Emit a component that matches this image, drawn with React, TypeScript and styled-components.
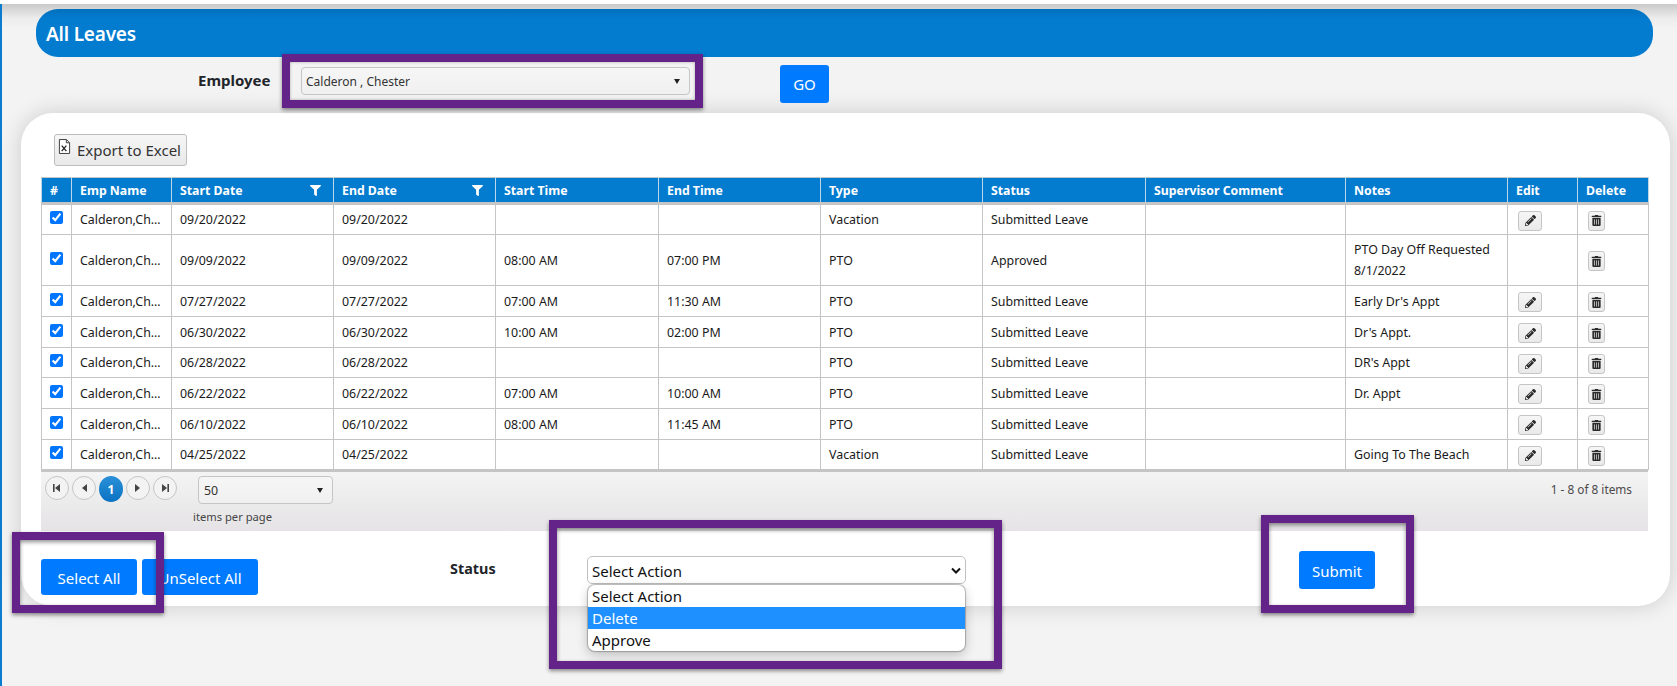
import React from "react";
import styled, { createGlobalStyle } from "styled-components";
import { FaPencilAlt, FaTrashAlt, FaFilter } from "react-icons/fa";

const Global = createGlobalStyle`
  html, body { margin: 0; padding: 0; background: #fff; }
  body { font-family: "Noto Sans", "Open Sans", Arial, sans-serif; overflow: hidden; color: #212529; }
`;

const Page = styled.div`
  position: relative;
  width: 1677px;
  height: 686px;
  overflow: hidden;
  background: #fff;
`;

const Shell = styled.div`
  height: 682px;
  margin-top: 4px;
  box-sizing: border-box;
  padding-top: 5px;
  border-left: 2px solid #0b7dd0;
  background: linear-gradient(#c9c9c9 0, #ececec 14px, #f3f3f3 24px);
`;

const TitleBar = styled.h1`
  margin: 0 24px 0 34px;
  height: 48px;
  box-sizing: border-box;
  padding-left: 10px;
  border-radius: 22px;
  background: linear-gradient(#0270bd 0, #037bcf 10px);
  color: #fff;
  font-size: 19px;
  font-weight: 600;
  line-height: 50px;
  letter-spacing: -0.2px;
`;

const Toolbar = styled.div`
  display: grid;
  grid-template-columns: 103px 389px 90px auto;
  justify-content: start;
  align-items: start;
  height: 56px;
  padding-left: 196px;
`;

const EmployeeLabel = styled.label`
  margin-top: 12px;
  font-size: 15px;
  line-height: 22px;
  font-weight: 700;
  color: #212529;
`;

const ComboBox = styled.div<{ $w?: number }>`
  display: flex;
  align-items: center;
  justify-content: space-between;
  box-sizing: border-box;
  width: ${(p) => p.$w ?? 388}px;
  height: 28px;
  padding: 0 9px 0 5px;
  border: 1px solid #c5c5c5;
  border-radius: 4px;
  background: linear-gradient(#f6f6f6, #f0f0f0);
  color: #333;
  font-size: 12.4px;
`;

const EmployeeCombo = styled(ComboBox)`
  margin-top: 10px;
  padding-left: 4px;
  font-size: 12px;
`;

const Caret = styled.i`
  display: block;
  width: 0;
  height: 0;
  border-left: 3.5px solid transparent;
  border-right: 3.5px solid transparent;
  border-top: 5px solid #222;
`;

const PrimaryButton = styled.button`
  box-sizing: border-box;
  padding: 0;
  border: 0;
  border-radius: 3px;
  background: #007bff;
  color: #fff;
  font-family: inherit;
  font-size: 15px;
`;

const GoButton = styled(PrimaryButton)`
  width: 49px;
  height: 38px;
  margin-top: 8px;
`;

const Card = styled.section`
  box-sizing: border-box;
  height: 493px;
  margin: 0 7px 0 19px;
  padding: 21px 20px 0;
  border-radius: 32px;
  background: #fff;
  box-shadow: 0 0 22px rgba(0, 0, 0, 0.16);
`;

const ExportButton = styled.button`
  display: flex;
  align-items: center;
  gap: 6px;
  box-sizing: border-box;
  width: 133px;
  height: 32px;
  margin: 0 0 11px 13px;
  padding: 0 0 0 3px;
  border: 1px solid #bdbdbd;
  border-radius: 3px;
  background: linear-gradient(#f6f6f6, #e9e9e9);
  color: #333;
  font-family: inherit;
  font-size: 15px;
`;

const ExportIconSlot = styled.span`
  display: block;
  height: 24px;
`;

const Grid = styled.table`
  width: 1607px;
  table-layout: fixed;
  border-collapse: collapse;
  font-size: 12.4px;
  color: #1a1a1a;
`;

const HeadCell = styled.th`
  height: 24px;
  padding: 0 0 0 8px;
  border: 1px solid #c5c5c5;
  border-left-color: #bcd6ea;
  border-right-color: #bcd6ea;
  border-bottom: 3px solid #c5c5c5;
  background: #037bcf;
  color: #fff;
  font-size: 12.3px;
  font-weight: 700;
  text-align: left;
  white-space: nowrap;
  overflow: hidden;
`;

const HeadInner = styled.span`
  display: flex;
  align-items: center;
  justify-content: space-between;
  padding-right: 12px;
`;

const BodyRow = styled.tr<{ $short?: boolean }>`
  & > td {
    height: ${(p) => (p.$short ? 21 : 22)}px;
  }
`;

const Cell = styled.td`
  padding: 4px 8px;
  border: 1px solid #c5c5c5;
  line-height: 21px;
  vertical-align: middle;
`;

const NameCell = styled(Cell)`
  max-width: 84px;
  white-space: nowrap;
  overflow: hidden;
  text-overflow: ellipsis;
`;

const CheckCell = styled(Cell)`
  padding: 0 0 4px 8px;
`;

const IconCell = styled(Cell)`
  padding: 3px 8px;
`;

const Check = styled.input`
  display: block;
  width: 13px;
  height: 13px;
  margin: 0;
`;

const IconButton = styled.button<{ $w: number }>`
  display: flex;
  align-items: center;
  justify-content: center;
  box-sizing: border-box;
  width: ${(p) => p.$w}px;
  height: 20px;
  margin: 2px 0 0 2px;
  padding: 0;
  border: 1px solid #c5c5c5;
  border-radius: 3px;
  background: linear-gradient(#f6f6f6, #e9e9e9);
  color: #2b2b2b;
`;

const GridFooter = styled.div`
  display: flex;
  justify-content: space-between;
  align-items: flex-start;
  box-sizing: border-box;
  width: 1607px;
  height: 61px;
  padding: 4px 16px 0 4px;
  border-top: 2px solid #c5c5c5;
  background: linear-gradient(#f4f4f4, #e5e3e5);
`;

const FooterLeft = styled.div`
  display: flex;
  align-items: flex-start;
  gap: 4px;
`;

const Pager = styled.div`
  display: flex;
  align-items: flex-start;
  gap: 3px;
  width: 144px;
`;

const PageButton = styled.span`
  display: flex;
  align-items: center;
  justify-content: center;
  box-sizing: border-box;
  width: 24px;
  height: 24px;
  border: 1px solid #c5c5c5;
  border-radius: 50%;
  background: #f3f3f3;
`;

const PageCurrent = styled.span`
  display: flex;
  align-items: center;
  justify-content: center;
  width: 24px;
  height: 26px;
  border-radius: 50%;
  background: linear-gradient(#2a90d8, #0a72c2);
  color: #fff;
  font-size: 12px;
  font-weight: 700;
`;

const SizeColumn = styled.div`
  display: flex;
  flex-direction: column;
  align-items: flex-start;
`;

const SizeCombo = styled(ComboBox)`
  margin-left: 5px;
  color: #333;
`;

const PerPage = styled.span`
  margin-top: 3px;
  font-size: 11.2px;
  line-height: 20px;
  color: #444;
`;

const ItemCount = styled.span`
  margin-top: 3px;
  font-size: 11.8px;
  line-height: 20px;
  color: #4a4a4a;
`;

const ActionRow = styled.div`
  display: grid;
  grid-template-columns: 409px 137px 379px 333px auto;
  align-items: start;
`;

const SelectionButtons = styled.div`
  display: flex;
  gap: 5px;
  margin-top: 28px;
`;

const SelectAllButton = styled(PrimaryButton)<{ $w: number }>`
  width: ${(p) => p.$w}px;
  height: 36px;
  padding-top: 1px;
`;

const StatusLabel = styled.label`
  margin-top: 26px;
  font-size: 14.4px;
  line-height: 24px;
  font-weight: 700;
`;

const ActionSelect = styled.div`
  position: relative;
  margin-top: 25px;
`;

const ActionBox = styled.div`
  display: flex;
  align-items: center;
  justify-content: space-between;
  box-sizing: border-box;
  height: 28px;
  padding: 2px 4px 0 4px;
  border: 1px solid #c0c0c0;
  border-radius: 5px;
  background: #fff;
  font-size: 15px;
  color: #111;
`;

const ActionList = styled.ul`
  position: absolute;
  top: 29px;
  left: 1px;
  right: 1px;
  margin: 0;
  padding: 0;
  overflow: hidden;
  list-style: none;
  background: #fff;
  border-radius: 7px;
  box-shadow: 0 0 1px 1px rgba(0, 0, 0, 0.25), 0 4px 12px rgba(0, 0, 0, 0.22);
  font-size: 15px;
  color: #111;
`;

const ActionOption = styled.li<{ $active?: boolean }>`
  height: 22px;
  padding-left: 4px;
  line-height: 22px;
  background: ${(p) => (p.$active ? "#1e90ff" : "transparent")};
  color: ${(p) => (p.$active ? "#fff" : "inherit")};
`;

const SubmitButton = styled(PrimaryButton)`
  width: 76px;
  height: 38px;
  margin-top: 20px;
  padding-top: 1px;
`;

const Annotation = styled.div`
  position: absolute;
  box-sizing: border-box;
  border: 8px solid #642388;
  box-shadow: 0 2px 4px rgba(0, 0, 0, 0.45), inset 0 2px 4px rgba(0, 0, 0, 0.45);
  pointer-events: none;
`;

const EmployeeMark = styled(Annotation)`
  left: 282px; top: 54px; width: 421px; height: 54px;
  box-shadow: 0 2px 4px rgba(0, 0, 0, 0.45), inset 0 0 3px rgba(0, 0, 0, 0.3);
`;
const SelectAllMark = styled(Annotation)`
  left: 12px; top: 532px; width: 152px; height: 81px;
`;
const ActionMark = styled(Annotation)`
  left: 549px; top: 520px; width: 453px; height: 149px;
`;
const SubmitMark = styled(Annotation)`
  left: 1261px; top: 515px; width: 153px; height: 98px;
`;

const widths = [30, 100, 162, 162, 163, 162, 162, 163, 200, 162, 70, 71];
const heads = ["#", "Emp Name", "Start Date", "End Date", "Start Time", "End Time", "Type", "Status", "Supervisor Comment", "Notes", "Edit", "Delete"];

type Row = { date: string; start: string; end: string; type: string; status: string; notes: string; edit: boolean; short?: boolean };
const rows: Row[] = [
  { date: "09/20/2022", start: "", end: "", type: "Vacation", status: "Submitted Leave", notes: "", edit: true, short: true },
  { date: "09/09/2022", start: "08:00 AM", end: "07:00 PM", type: "PTO", status: "Approved", notes: "PTO Day Off Requested 8/1/2022", edit: false },
  { date: "07/27/2022", start: "07:00 AM", end: "11:30 AM", type: "PTO", status: "Submitted Leave", notes: "Early Dr's Appt", edit: true },
  { date: "06/30/2022", start: "10:00 AM", end: "02:00 PM", type: "PTO", status: "Submitted Leave", notes: "Dr's Appt.", edit: true },
  { date: "06/28/2022", start: "", end: "", type: "PTO", status: "Submitted Leave", notes: "DR's Appt", edit: true, short: true },
  { date: "06/22/2022", start: "07:00 AM", end: "10:00 AM", type: "PTO", status: "Submitted Leave", notes: "Dr. Appt", edit: true },
  { date: "06/10/2022", start: "08:00 AM", end: "11:45 AM", type: "PTO", status: "Submitted Leave", notes: "", edit: true },
  { date: "04/25/2022", start: "", end: "", type: "Vacation", status: "Submitted Leave", notes: "Going To The Beach", edit: true, short: true },
];

const ExcelIcon = () => (
  <svg width="13" height="15" viewBox="0 0 14 16" fill="none">
    <path d="M1.5 .5h7.5l3.5 3.5v11.5h-11z" stroke="#333" fill="#fff" />
    <path d="M9 .5v3.5h3.5" stroke="#333" />
    <path d="M4 7l5 6M9 7l-5 6" stroke="#222" strokeWidth="1.4" />
  </svg>
);

const Tri = ({ dir, bar }: { dir: "l" | "r"; bar?: boolean }) => (
  <svg width="10" height="10" viewBox="0 0 10 10" fill="#444">
    {dir === "l" ? <path d="M8 1v8L3 5z" /> : <path d="M2 1v8l5-4z" />}
    {bar && (dir === "l" ? <rect x="1" y="1" width="1.6" height="8" /> : <rect x="7.4" y="1" width="1.6" height="8" />)}
  </svg>
);

const Chevron = () => (
  <svg width="10" height="8" viewBox="0 0 10 8" fill="none">
    <path d="M1 1.5l4 4 4-4" stroke="#111" strokeWidth="2" />
  </svg>
);

export default function App() {
  return (
    <Page>
      <Global />
      <Shell>
        <TitleBar>All Leaves</TitleBar>
        <Toolbar>
          <EmployeeLabel>Employee</EmployeeLabel>
          <EmployeeCombo $w={389}>
            <span>Calderon , Chester</span>
            <Caret />
          </EmployeeCombo>
          <span />
          <GoButton>GO</GoButton>
        </Toolbar>
        <Card>
          <ExportButton>
            <ExportIconSlot>
              <ExcelIcon />
            </ExportIconSlot>
            Export to Excel
          </ExportButton>
          <Grid>
            <colgroup>
              {widths.map((w, i) => (
                <col key={i} width={w} />
              ))}
            </colgroup>
            <thead>
              <tr>
                {heads.map((h) => (
                  <HeadCell key={h}>
                    {h === "Start Date" || h === "End Date" ? (
                      <HeadInner>
                        {h}
                        <FaFilter size={11} color="#fff" />
                      </HeadInner>
                    ) : (
                      h
                    )}
                  </HeadCell>
                ))}
              </tr>
            </thead>
            <tbody>
              {rows.map((r) => (
                <BodyRow key={r.date} $short={r.short}>
                  <CheckCell>
                    <Check type="checkbox" checked readOnly />
                  </CheckCell>
                  <NameCell>Calderon,Chester</NameCell>
                  <Cell>{r.date}</Cell>
                  <Cell>{r.date}</Cell>
                  <Cell>{r.start}</Cell>
                  <Cell>{r.end}</Cell>
                  <Cell>{r.type}</Cell>
                  <Cell>{r.status}</Cell>
                  <Cell />
                  <Cell>{r.notes}</Cell>
                  <IconCell>
                    {r.edit && (
                      <IconButton $w={24}>
                        <FaPencilAlt size={11} />
                      </IconButton>
                    )}
                  </IconCell>
                  <IconCell>
                    <IconButton $w={17}>
                      <FaTrashAlt size={11} />
                    </IconButton>
                  </IconCell>
                </BodyRow>
              ))}
            </tbody>
          </Grid>
          <GridFooter>
            <FooterLeft>
              <Pager>
                <PageButton><Tri dir="l" bar /></PageButton>
                <PageButton><Tri dir="l" /></PageButton>
                <PageCurrent>1</PageCurrent>
                <PageButton><Tri dir="r" /></PageButton>
                <PageButton><Tri dir="r" bar /></PageButton>
              </Pager>
              <SizeColumn>
                <SizeCombo $w={135}>
                  <span>50</span>
                  <Caret />
                </SizeCombo>
                <PerPage>items per page</PerPage>
              </SizeColumn>
            </FooterLeft>
            <ItemCount>1 - 8 of 8 items</ItemCount>
          </GridFooter>
          <ActionRow>
            <SelectionButtons>
              <SelectAllButton $w={96}>Select All</SelectAllButton>
              <SelectAllButton $w={116}>UnSelect All</SelectAllButton>
            </SelectionButtons>
            <StatusLabel>Status</StatusLabel>
            <ActionSelect>
              <ActionBox>
                <span>Select Action</span>
                <Chevron />
              </ActionBox>
              <ActionList>
                <ActionOption>Select Action</ActionOption>
                <ActionOption $active>Delete</ActionOption>
                <ActionOption>Approve</ActionOption>
              </ActionList>
            </ActionSelect>
            <span />
            <SubmitButton>Submit</SubmitButton>
          </ActionRow>
        </Card>
      </Shell>
      <EmployeeMark />
      <SelectAllMark />
      <ActionMark />
      <SubmitMark />
    </Page>
  );
}
